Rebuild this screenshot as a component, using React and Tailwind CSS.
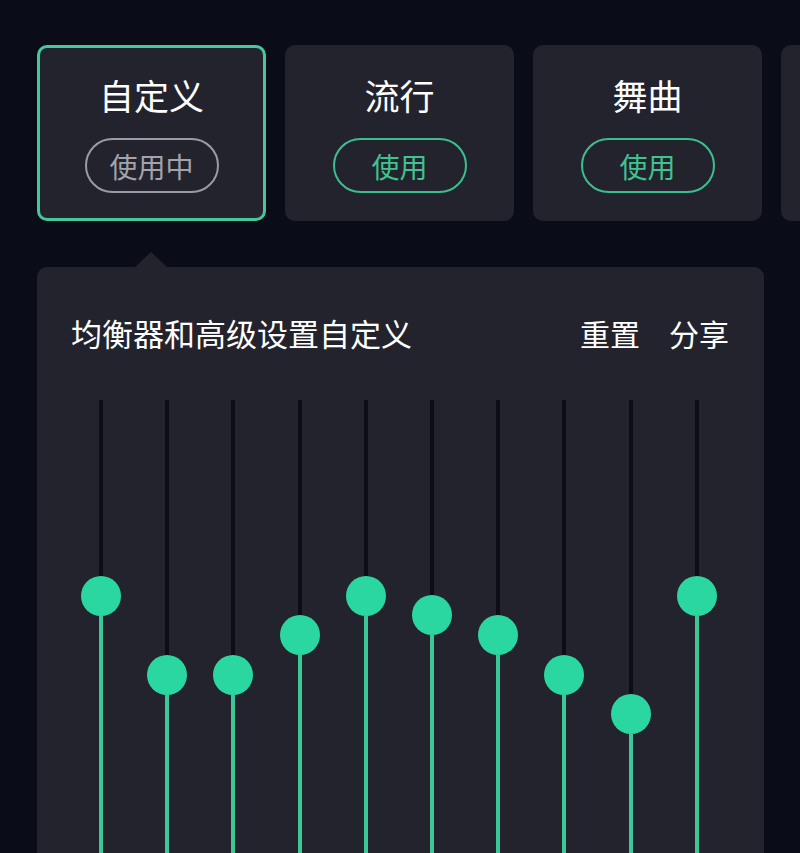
import React from "react";

const font = { fontFamily: '"Noto Sans CJK SC", "Noto Sans", sans-serif' };

const presets = [
  { name: "自定义", active: true },
  { name: "流行" },
  { name: "舞曲" },
  { name: "" },
];

const knobs = [596, 675, 675, 635, 596, 615, 635, 675, 714, 596];

function Card({ name, active }) {
  return (
    <div
      className={
        "w-[229px] h-[176px] shrink-0 rounded-[10px] bg-[#23232d] flex flex-col items-center " +
        (active ? "border-[3px] border-[#45c99a] pt-[24px]" : "pt-[27px]")
      }
    >
      {name && (
        <>
          <div className="text-[35px] leading-[46px] text-white">{name}</div>
          <div
            className={
              "mt-[20px] w-[134px] h-[55px] rounded-full border-2 flex items-center justify-center text-[28px] " +
              (active ? "border-[#9b9ba3] text-[#a3a3ab]" : "border-[#3dbf8d] text-[#3fc290]")
            }
          >
            {active ? "使用中" : "使用"}
          </div>
        </>
      )}
    </div>
  );
}

export default function App() {
  return (
    <div style={font} className="w-[800px] h-[853px] overflow-hidden bg-[#0a0d18] flex flex-col">
      <div className="flex gap-[19px] pl-[37px] pt-[45px]">
        {presets.map((p, i) => (
          <Card key={i} {...p} />
        ))}
      </div>
      <div className="ml-[135px] mt-[31px] w-0 h-0 border-l-[16px] border-r-[16px] border-b-[15px] border-l-transparent border-r-transparent border-b-[#23232e]" />
      <div className="ml-[37px] w-[727px] flex-1 rounded-t-[10px] bg-[#23232e] flex flex-col">
        <div className="flex items-center pl-[34px] pr-[35px] pt-[46px] h-[86px] text-white leading-[40px]">
          <div className="flex-1 text-[31px]">均衡器和高级设置自定义</div>
          <div className="flex gap-[29px] text-[30px]">
            <span>重置</span>
            <span>分享</span>
          </div>
        </div>
        <div className="mt-[47px] pl-[31px] pr-[34px] flex-1 grid grid-cols-10">
          {knobs.map((y, i) => (
            <div key={i} className="flex flex-col items-center h-full">
              <div className="w-[4px] bg-[#0b0d17]" style={{ height: y - 20 - 400 }} />
              <div className="w-[40px] h-[40px] rounded-full bg-[#2bd7a0] shrink-0" />
              <div className="w-[4px] flex-1 bg-[#3cc797]" />
            </div>
          ))}
        </div>
      </div>
    </div>
  );
}
